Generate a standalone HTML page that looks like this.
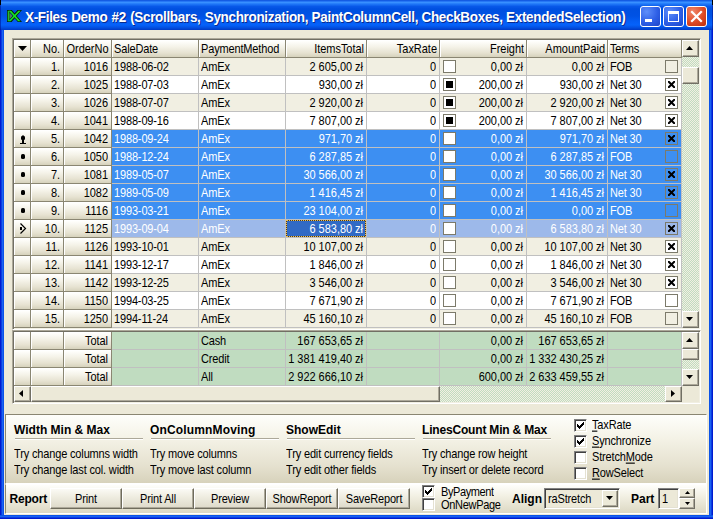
<!DOCTYPE html>
<html><head><meta charset="utf-8"><title>X-Files Demo #2</title>
<style>
html,body{margin:0;padding:0;}
body{width:713px;height:519px;overflow:hidden;background:#000;position:relative;font-family:"Liberation Sans",sans-serif;font-size:11px;color:#000;}
div,span{position:absolute;box-sizing:border-box;white-space:nowrap;}
#win{left:0;top:0;width:713px;height:519px;background:#0A50DC;overflow:hidden;}
#tb{left:0;top:0;width:713px;height:30px;background:linear-gradient(180deg,#0A4CD6 0px,#1E6CF0 1px,#3890FF 2.5px,#2078F8 4px,#0858E8 6.5px,#0050E0 9px,#0052E4 16px,#045EF6 22px,#0562FA 25px,#0350E2 27.5px,#003AC4 30px);}
#title{left:25px;top:9px;height:18px;line-height:18px;font-weight:bold;font-size:13.5px;letter-spacing:-0.33px;transform:scaleY(1.08);transform-origin:0 60%;color:#fff;text-shadow:1px 1px 0 #0A2A8C;}
#client{left:4px;top:30px;width:705px;height:485px;background:#ECE9D8;}
.fx{background:linear-gradient(180deg,#FFFFFD 0%,#F5F3E9 35%,#E6E2D1 75%,#D6D2BC 100%);border-left:1px solid #fff;border-top:1px solid #fff;}
.t{height:17px;line-height:17px;margin-top:1px;transform:scaleY(1.13);transform-origin:50% 50%;letter-spacing:-0.15px;}
.r{text-align:right;letter-spacing:-0.03px;}
.cb{width:13px;height:13px;border:1px solid #7C7A6A;}
.w{color:#fff;}
.btn{background:linear-gradient(180deg,#FBFAF5 0%,#EFEDE1 40%,#DDD9C9 100%);border:1px solid;border-color:#fff #6E6B5C #6E6B5C #fff;box-shadow:inset -1px -1px 0 #ACA899;}
.sb{background:#ECE9D8;border:1px solid;border-color:#fff #716F64 #716F64 #fff;box-shadow:inset -1px -1px 0 #ACA899;}
.trk{background:#D6E3CC;background-image:repeating-conic-gradient(#C0DCC0 0% 25%,#F2EFE2 0% 50%);background-size:2px 2px;}
.b{font-weight:bold;font-size:12px;transform:none;letter-spacing:0;}
u{text-decoration:underline;text-underline-offset:1px;text-decoration-thickness:1px;}
</style></head><body>
<div id="win">
<div id="tb"></div>

<div style="left:0;top:30px;width:4px;height:489px;background:linear-gradient(90deg,#001AD0 0,#001AD0 1px,#0A3EE0 1px,#0A3EE0 2px,#1A62F2 2px,#1A62F2 3px,#0A52E8 3px)"></div>
<div style="left:709px;top:30px;width:4px;height:489px;background:linear-gradient(90deg,#0A52E8 0,#0A52E8 1px,#1A62F2 1px,#1A62F2 2px,#0A3EE0 2px,#0A3EE0 3px,#001AD0 3px)"></div>
<div style="left:0;top:515px;width:713px;height:4px;background:linear-gradient(180deg,#0A52E8 0,#0A52E8 1px,#1A62F2 1px,#1A62F2 2px,#0A3EE0 2px,#0A3EE0 3px,#001AD0 3px)"></div>
<svg style="position:absolute;left:7px;top:10px" width="15" height="12" viewBox="0 0 15 12"><g fill="#05250A"><rect x="0" y="0" width="3.2" height="12"/><path d="M0.8 0 H4.8 L15 12 H10.8 Z"/><path d="M10.4 0 H15 L4.6 12 H0.3 Z"/></g><rect x="0.7" y="0.8" width="1.7" height="10.4" fill="#22B832"/><path d="M2.6 3.2 L5.4 6 L2.6 8.8 Z" fill="#5E7A62"/><g fill="#17E324"><path d="M11.4 0.7 H13.6 L3.6 11.3 H1.4 Z"/><path d="M1.8 0.7 H4.1 L13.4 11.3 H11.2 Z"/></g></svg>
<div id="title"><span style="position:static;word-spacing:0.8px">X-Files Demo #2 (Scrollbars, </span>Synchronization, PaintColumnCell, CheckBoxes, ExtendedSelection)</div>
<div style="left:640px;top:6px;width:21px;height:21px;border:1px solid #fff;border-radius:3px;background:radial-gradient(circle at 30% 25%,#5E8EFA 0%,#2E5FE6 55%,#1C45C8 100%)">
<div style="left:4px;top:12px;width:7px;height:3px;background:#fff"></div>
</div>
<div style="left:663px;top:6px;width:21px;height:21px;border:1px solid #fff;border-radius:3px;background:radial-gradient(circle at 30% 25%,#5E8EFA 0%,#2E5FE6 55%,#1C45C8 100%)">
<div style="left:4px;top:4px;width:11px;height:11px;border:1px solid #fff;border-top:3px solid #fff"></div>
</div>
<div style="left:686px;top:6px;width:21px;height:21px;border:1px solid #fff;border-radius:3px;background:radial-gradient(circle at 30% 25%,#F0876A 0%,#DE4B26 55%,#BC2E0E 100%)">
<svg style="position:absolute;left:3px;top:3px" width="13" height="13" viewBox="0 0 13 13"><path d="M2 2 L11 11 M11 2 L2 11" stroke="#fff" stroke-width="2.2" stroke-linecap="square"/></svg>
</div>
<div id="client"></div>
<div style="left:0;top:0;width:1px;height:30px;background:rgba(0,0,120,0.45)"></div><div style="left:712px;top:0;width:1px;height:30px;background:rgba(0,0,120,0.45)"></div>
<div style="left:0;top:0;width:1px;height:5px;background:#000"></div><div style="left:712px;top:0;width:1px;height:5px;background:#000"></div>
<div style="left:12px;top:38px;width:689px;height:292px;border:1px solid;border-color:#ACA899 #fff #fff #ACA899;box-shadow:inset 1px 1px 0 #716F64,inset -1px -1px 0 #F1EFE2"></div>
<div style="left:12px;top:330px;width:689px;height:74px;border:1px solid;border-color:#ACA899 #fff #fff #ACA899;box-shadow:inset 1px 1px 0 #716F64,inset -1px -1px 0 #F1EFE2"></div>
<div style="left:14px;top:40px;width:17px;height:18px;background:#8A8672"></div>
<div class="fx" style="left:14px;top:40px;width:16px;height:17px"></div>
<div style="left:31px;top:40px;width:33px;height:18px;background:#8A8672"></div>
<div class="fx" style="left:31px;top:40px;width:32px;height:17px"></div>
<div class="t r" style="left:31px;top:40px;width:29px">No.</div>
<div style="left:64px;top:40px;width:48px;height:18px;background:#8A8672"></div>
<div class="fx" style="left:64px;top:40px;width:47px;height:17px"></div>
<div class="t r" style="left:64px;top:40px;width:44.5px">OrderNo</div>
<div style="left:112px;top:40px;width:87px;height:18px;background:#8A8672"></div>
<div class="fx" style="left:112px;top:40px;width:86px;height:17px"></div>
<div class="t" style="left:114px;top:40px">SaleDate</div>
<div style="left:199px;top:40px;width:87px;height:18px;background:#8A8672"></div>
<div class="fx" style="left:199px;top:40px;width:86px;height:17px"></div>
<div class="t" style="left:201px;top:40px">PaymentMethod</div>
<div style="left:286px;top:40px;width:81px;height:18px;background:#8A8672"></div>
<div class="fx" style="left:286px;top:40px;width:80px;height:17px"></div>
<div class="t r" style="left:286px;top:40px;width:78px">ItemsTotal</div>
<div style="left:367px;top:40px;width:73px;height:18px;background:#8A8672"></div>
<div class="fx" style="left:367px;top:40px;width:72px;height:17px"></div>
<div class="t r" style="left:367px;top:40px;width:70px">TaxRate</div>
<div style="left:440px;top:40px;width:87px;height:18px;background:#8A8672"></div>
<div class="fx" style="left:440px;top:40px;width:86px;height:17px"></div>
<div class="t r" style="left:440px;top:40px;width:84px">Freight</div>
<div style="left:527px;top:40px;width:81px;height:18px;background:#8A8672"></div>
<div class="fx" style="left:527px;top:40px;width:80px;height:17px"></div>
<div class="t r" style="left:527px;top:40px;width:78px">AmountPaid</div>
<div style="left:608px;top:40px;width:74px;height:18px;background:#8A8672"></div>
<div class="fx" style="left:608px;top:40px;width:73px;height:17px"></div>
<div class="t" style="left:610px;top:40px">Terms</div>
<svg style="position:absolute;left:18px;top:46px" width="9" height="5" viewBox="0 0 9 5"><path d="M0 0 H9 L4.5 5 Z" fill="#000"/></svg>
<div style="left:14px;top:58px;width:17px;height:18px;background:#8A8672"></div>
<div class="fx" style="left:14px;top:58px;width:16px;height:17px"></div>
<div style="left:31px;top:58px;width:33px;height:18px;background:#8A8672"></div>
<div class="fx" style="left:31px;top:58px;width:32px;height:17px"></div>
<div class="t r" style="left:31px;top:58px;width:29px">1.</div>
<div style="left:64px;top:58px;width:48px;height:18px;background:#8A8672"></div>
<div class="fx" style="left:64px;top:58px;width:47px;height:17px"></div>
<div class="t r" style="left:64px;top:58px;width:44px">1016</div>
<div style="left:112px;top:58px;width:570px;height:18px;background:#C0C0C0"></div>
<div style="left:112px;top:58px;width:86px;height:17px;background:#F1EFE2"></div>
<div style="left:199px;top:58px;width:86px;height:17px;background:#F1EFE2"></div>
<div style="left:286px;top:58px;width:80px;height:17px;background:#F1EFE2"></div>
<div style="left:367px;top:58px;width:72px;height:17px;background:#F1EFE2"></div>
<div style="left:440px;top:58px;width:86px;height:17px;background:#F1EFE2"></div>
<div style="left:527px;top:58px;width:80px;height:17px;background:#F1EFE2"></div>
<div style="left:608px;top:58px;width:73px;height:17px;background:#F1EFE2"></div>
<div class="t" style="left:114px;top:58px">1988-06-02</div>
<div class="t" style="left:201px;top:58px">AmEx</div>
<div class="t r" style="left:286px;top:58px;width:77px">2 605,00 zł</div>
<div class="t r" style="left:367px;top:58px;width:69px">0</div>
<div class="t r" style="left:440px;top:58px;width:83px">0,00 zł</div>
<div class="t r" style="left:527px;top:58px;width:77px">0,00 zł</div>
<div class="t" style="left:610px;top:58px">FOB</div>
<div class="cb" style="left:443px;top:60px;background:#fff"></div>
<div class="cb" style="left:665px;top:60px;background:#F1EFE2"></div>
<div style="left:14px;top:76px;width:17px;height:18px;background:#8A8672"></div>
<div class="fx" style="left:14px;top:76px;width:16px;height:17px"></div>
<div style="left:31px;top:76px;width:33px;height:18px;background:#8A8672"></div>
<div class="fx" style="left:31px;top:76px;width:32px;height:17px"></div>
<div class="t r" style="left:31px;top:76px;width:29px">2.</div>
<div style="left:64px;top:76px;width:48px;height:18px;background:#8A8672"></div>
<div class="fx" style="left:64px;top:76px;width:47px;height:17px"></div>
<div class="t r" style="left:64px;top:76px;width:44px">1025</div>
<div style="left:112px;top:76px;width:570px;height:18px;background:#C0C0C0"></div>
<div style="left:112px;top:76px;width:86px;height:17px;background:#FFFFFF"></div>
<div style="left:199px;top:76px;width:86px;height:17px;background:#FFFFFF"></div>
<div style="left:286px;top:76px;width:80px;height:17px;background:#FFFFFF"></div>
<div style="left:367px;top:76px;width:72px;height:17px;background:#FFFFFF"></div>
<div style="left:440px;top:76px;width:86px;height:17px;background:#FFFFFF"></div>
<div style="left:527px;top:76px;width:80px;height:17px;background:#FFFFFF"></div>
<div style="left:608px;top:76px;width:73px;height:17px;background:#FFFFFF"></div>
<div class="t" style="left:114px;top:76px">1988-07-03</div>
<div class="t" style="left:201px;top:76px">AmEx</div>
<div class="t r" style="left:286px;top:76px;width:77px">930,00 zł</div>
<div class="t r" style="left:367px;top:76px;width:69px">0</div>
<div class="t r" style="left:440px;top:76px;width:83px">200,00 zł</div>
<div class="t r" style="left:527px;top:76px;width:77px">930,00 zł</div>
<div class="t" style="left:610px;top:76px">Net 30</div>
<div class="cb" style="left:443px;top:78px;background:#fff"></div>
<div style="left:446px;top:81px;width:7px;height:7px;background:#000"></div>
<div class="cb" style="left:665px;top:78px;background:#fff"></div>
<svg style="position:absolute;left:668px;top:81px" width="7" height="7" viewBox="0 0 7 7"><path d="M0.8 0.8 L6.2 6.2 M6.2 0.8 L0.8 6.2" stroke="#000" stroke-width="2" stroke-linecap="square"/></svg>
<div style="left:14px;top:94px;width:17px;height:18px;background:#8A8672"></div>
<div class="fx" style="left:14px;top:94px;width:16px;height:17px"></div>
<div style="left:31px;top:94px;width:33px;height:18px;background:#8A8672"></div>
<div class="fx" style="left:31px;top:94px;width:32px;height:17px"></div>
<div class="t r" style="left:31px;top:94px;width:29px">3.</div>
<div style="left:64px;top:94px;width:48px;height:18px;background:#8A8672"></div>
<div class="fx" style="left:64px;top:94px;width:47px;height:17px"></div>
<div class="t r" style="left:64px;top:94px;width:44px">1026</div>
<div style="left:112px;top:94px;width:570px;height:18px;background:#C0C0C0"></div>
<div style="left:112px;top:94px;width:86px;height:17px;background:#F1EFE2"></div>
<div style="left:199px;top:94px;width:86px;height:17px;background:#F1EFE2"></div>
<div style="left:286px;top:94px;width:80px;height:17px;background:#F1EFE2"></div>
<div style="left:367px;top:94px;width:72px;height:17px;background:#F1EFE2"></div>
<div style="left:440px;top:94px;width:86px;height:17px;background:#F1EFE2"></div>
<div style="left:527px;top:94px;width:80px;height:17px;background:#F1EFE2"></div>
<div style="left:608px;top:94px;width:73px;height:17px;background:#F1EFE2"></div>
<div class="t" style="left:114px;top:94px">1988-07-07</div>
<div class="t" style="left:201px;top:94px">AmEx</div>
<div class="t r" style="left:286px;top:94px;width:77px">2 920,00 zł</div>
<div class="t r" style="left:367px;top:94px;width:69px">0</div>
<div class="t r" style="left:440px;top:94px;width:83px">200,00 zł</div>
<div class="t r" style="left:527px;top:94px;width:77px">2 920,00 zł</div>
<div class="t" style="left:610px;top:94px">Net 30</div>
<div class="cb" style="left:443px;top:96px;background:#fff"></div>
<div style="left:446px;top:99px;width:7px;height:7px;background:#000"></div>
<div class="cb" style="left:665px;top:96px;background:#fff"></div>
<svg style="position:absolute;left:668px;top:99px" width="7" height="7" viewBox="0 0 7 7"><path d="M0.8 0.8 L6.2 6.2 M6.2 0.8 L0.8 6.2" stroke="#000" stroke-width="2" stroke-linecap="square"/></svg>
<div style="left:14px;top:112px;width:17px;height:18px;background:#8A8672"></div>
<div class="fx" style="left:14px;top:112px;width:16px;height:17px"></div>
<div style="left:31px;top:112px;width:33px;height:18px;background:#8A8672"></div>
<div class="fx" style="left:31px;top:112px;width:32px;height:17px"></div>
<div class="t r" style="left:31px;top:112px;width:29px">4.</div>
<div style="left:64px;top:112px;width:48px;height:18px;background:#8A8672"></div>
<div class="fx" style="left:64px;top:112px;width:47px;height:17px"></div>
<div class="t r" style="left:64px;top:112px;width:44px">1041</div>
<div style="left:112px;top:112px;width:570px;height:18px;background:#C0C0C0"></div>
<div style="left:112px;top:112px;width:86px;height:17px;background:#FFFFFF"></div>
<div style="left:199px;top:112px;width:86px;height:17px;background:#FFFFFF"></div>
<div style="left:286px;top:112px;width:80px;height:17px;background:#FFFFFF"></div>
<div style="left:367px;top:112px;width:72px;height:17px;background:#FFFFFF"></div>
<div style="left:440px;top:112px;width:86px;height:17px;background:#FFFFFF"></div>
<div style="left:527px;top:112px;width:80px;height:17px;background:#FFFFFF"></div>
<div style="left:608px;top:112px;width:73px;height:17px;background:#FFFFFF"></div>
<div class="t" style="left:114px;top:112px">1988-09-16</div>
<div class="t" style="left:201px;top:112px">AmEx</div>
<div class="t r" style="left:286px;top:112px;width:77px">7 807,00 zł</div>
<div class="t r" style="left:367px;top:112px;width:69px">0</div>
<div class="t r" style="left:440px;top:112px;width:83px">200,00 zł</div>
<div class="t r" style="left:527px;top:112px;width:77px">7 807,00 zł</div>
<div class="t" style="left:610px;top:112px">Net 30</div>
<div class="cb" style="left:443px;top:114px;background:#fff"></div>
<div style="left:446px;top:117px;width:7px;height:7px;background:#000"></div>
<div class="cb" style="left:665px;top:114px;background:#fff"></div>
<svg style="position:absolute;left:668px;top:117px" width="7" height="7" viewBox="0 0 7 7"><path d="M0.8 0.8 L6.2 6.2 M6.2 0.8 L0.8 6.2" stroke="#000" stroke-width="2" stroke-linecap="square"/></svg>
<div style="left:14px;top:130px;width:17px;height:18px;background:#8A8672"></div>
<div class="fx" style="left:14px;top:130px;width:16px;height:17px"></div>
<div style="left:31px;top:130px;width:33px;height:18px;background:#8A8672"></div>
<div class="fx" style="left:31px;top:130px;width:32px;height:17px"></div>
<div class="t r" style="left:31px;top:130px;width:29px">5.</div>
<div style="left:64px;top:130px;width:48px;height:18px;background:#8A8672"></div>
<div class="fx" style="left:64px;top:130px;width:47px;height:17px"></div>
<div class="t r" style="left:64px;top:130px;width:44px">1042</div>
<div style="left:112px;top:130px;width:570px;height:18px;background:#C0C0C0"></div>
<div style="left:112px;top:130px;width:86px;height:17px;background:#3D8FF2"></div>
<div style="left:199px;top:130px;width:86px;height:17px;background:#3D8FF2"></div>
<div style="left:286px;top:130px;width:80px;height:17px;background:#3D8FF2"></div>
<div style="left:367px;top:130px;width:72px;height:17px;background:#3D8FF2"></div>
<div style="left:440px;top:130px;width:86px;height:17px;background:#3D8FF2"></div>
<div style="left:527px;top:130px;width:80px;height:17px;background:#3D8FF2"></div>
<div style="left:608px;top:130px;width:73px;height:17px;background:#3D8FF2"></div>
<div class="t w" style="left:114px;top:130px">1988-09-24</div>
<div class="t w" style="left:201px;top:130px">AmEx</div>
<div class="t r w" style="left:286px;top:130px;width:77px">971,70 zł</div>
<div class="t r w" style="left:367px;top:130px;width:69px">0</div>
<div class="t r w" style="left:440px;top:130px;width:83px">0,00 zł</div>
<div class="t r w" style="left:527px;top:130px;width:77px">971,70 zł</div>
<div class="t w" style="left:610px;top:130px">Net 30</div>
<div class="cb" style="left:443px;top:132px;background:#fff"></div>
<div class="cb" style="left:665px;top:132px;background:#3D8FF2"></div>
<svg style="position:absolute;left:668px;top:135px" width="7" height="7" viewBox="0 0 7 7"><path d="M0.8 0.8 L6.2 6.2 M6.2 0.8 L0.8 6.2" stroke="#000" stroke-width="2" stroke-linecap="square"/></svg>
<svg style="position:absolute;left:19px;top:135px" width="8" height="10" viewBox="0 0 8 10"><rect x="2" y="1" width="4" height="4" rx="1.2" fill="#000"/><rect x="3" y="0.5" width="2" height="8" fill="#000"/><rect x="1" y="8" width="6" height="1" fill="#000"/></svg>
<div style="left:14px;top:148px;width:17px;height:18px;background:#8A8672"></div>
<div class="fx" style="left:14px;top:148px;width:16px;height:17px"></div>
<div style="left:31px;top:148px;width:33px;height:18px;background:#8A8672"></div>
<div class="fx" style="left:31px;top:148px;width:32px;height:17px"></div>
<div class="t r" style="left:31px;top:148px;width:29px">6.</div>
<div style="left:64px;top:148px;width:48px;height:18px;background:#8A8672"></div>
<div class="fx" style="left:64px;top:148px;width:47px;height:17px"></div>
<div class="t r" style="left:64px;top:148px;width:44px">1050</div>
<div style="left:112px;top:148px;width:570px;height:18px;background:#C0C0C0"></div>
<div style="left:112px;top:148px;width:86px;height:17px;background:#3D8FF2"></div>
<div style="left:199px;top:148px;width:86px;height:17px;background:#3D8FF2"></div>
<div style="left:286px;top:148px;width:80px;height:17px;background:#3D8FF2"></div>
<div style="left:367px;top:148px;width:72px;height:17px;background:#3D8FF2"></div>
<div style="left:440px;top:148px;width:86px;height:17px;background:#3D8FF2"></div>
<div style="left:527px;top:148px;width:80px;height:17px;background:#3D8FF2"></div>
<div style="left:608px;top:148px;width:73px;height:17px;background:#3D8FF2"></div>
<div class="t w" style="left:114px;top:148px">1988-12-24</div>
<div class="t w" style="left:201px;top:148px">AmEx</div>
<div class="t r w" style="left:286px;top:148px;width:77px">6 287,85 zł</div>
<div class="t r w" style="left:367px;top:148px;width:69px">0</div>
<div class="t r w" style="left:440px;top:148px;width:83px">0,00 zł</div>
<div class="t r w" style="left:527px;top:148px;width:77px">6 287,85 zł</div>
<div class="t w" style="left:610px;top:148px">FOB</div>
<div class="cb" style="left:443px;top:150px;background:#fff"></div>
<div class="cb" style="left:665px;top:150px;background:#3D8FF2"></div>
<svg style="position:absolute;left:20px;top:153px" width="6" height="7" viewBox="0 0 6 7"><rect x="1" y="1" width="4" height="5" rx="1.6" fill="#000"/></svg>
<div style="left:14px;top:166px;width:17px;height:18px;background:#8A8672"></div>
<div class="fx" style="left:14px;top:166px;width:16px;height:17px"></div>
<div style="left:31px;top:166px;width:33px;height:18px;background:#8A8672"></div>
<div class="fx" style="left:31px;top:166px;width:32px;height:17px"></div>
<div class="t r" style="left:31px;top:166px;width:29px">7.</div>
<div style="left:64px;top:166px;width:48px;height:18px;background:#8A8672"></div>
<div class="fx" style="left:64px;top:166px;width:47px;height:17px"></div>
<div class="t r" style="left:64px;top:166px;width:44px">1081</div>
<div style="left:112px;top:166px;width:570px;height:18px;background:#C0C0C0"></div>
<div style="left:112px;top:166px;width:86px;height:17px;background:#3D8FF2"></div>
<div style="left:199px;top:166px;width:86px;height:17px;background:#3D8FF2"></div>
<div style="left:286px;top:166px;width:80px;height:17px;background:#3D8FF2"></div>
<div style="left:367px;top:166px;width:72px;height:17px;background:#3D8FF2"></div>
<div style="left:440px;top:166px;width:86px;height:17px;background:#3D8FF2"></div>
<div style="left:527px;top:166px;width:80px;height:17px;background:#3D8FF2"></div>
<div style="left:608px;top:166px;width:73px;height:17px;background:#3D8FF2"></div>
<div class="t w" style="left:114px;top:166px">1989-05-07</div>
<div class="t w" style="left:201px;top:166px">AmEx</div>
<div class="t r w" style="left:286px;top:166px;width:77px">30 566,00 zł</div>
<div class="t r w" style="left:367px;top:166px;width:69px">0</div>
<div class="t r w" style="left:440px;top:166px;width:83px">0,00 zł</div>
<div class="t r w" style="left:527px;top:166px;width:77px">30 566,00 zł</div>
<div class="t w" style="left:610px;top:166px">Net 30</div>
<div class="cb" style="left:443px;top:168px;background:#fff"></div>
<div class="cb" style="left:665px;top:168px;background:#3D8FF2"></div>
<svg style="position:absolute;left:668px;top:171px" width="7" height="7" viewBox="0 0 7 7"><path d="M0.8 0.8 L6.2 6.2 M6.2 0.8 L0.8 6.2" stroke="#000" stroke-width="2" stroke-linecap="square"/></svg>
<svg style="position:absolute;left:20px;top:171px" width="6" height="7" viewBox="0 0 6 7"><rect x="1" y="1" width="4" height="5" rx="1.6" fill="#000"/></svg>
<div style="left:14px;top:184px;width:17px;height:18px;background:#8A8672"></div>
<div class="fx" style="left:14px;top:184px;width:16px;height:17px"></div>
<div style="left:31px;top:184px;width:33px;height:18px;background:#8A8672"></div>
<div class="fx" style="left:31px;top:184px;width:32px;height:17px"></div>
<div class="t r" style="left:31px;top:184px;width:29px">8.</div>
<div style="left:64px;top:184px;width:48px;height:18px;background:#8A8672"></div>
<div class="fx" style="left:64px;top:184px;width:47px;height:17px"></div>
<div class="t r" style="left:64px;top:184px;width:44px">1082</div>
<div style="left:112px;top:184px;width:570px;height:18px;background:#C0C0C0"></div>
<div style="left:112px;top:184px;width:86px;height:17px;background:#3D8FF2"></div>
<div style="left:199px;top:184px;width:86px;height:17px;background:#3D8FF2"></div>
<div style="left:286px;top:184px;width:80px;height:17px;background:#3D8FF2"></div>
<div style="left:367px;top:184px;width:72px;height:17px;background:#3D8FF2"></div>
<div style="left:440px;top:184px;width:86px;height:17px;background:#3D8FF2"></div>
<div style="left:527px;top:184px;width:80px;height:17px;background:#3D8FF2"></div>
<div style="left:608px;top:184px;width:73px;height:17px;background:#3D8FF2"></div>
<div class="t w" style="left:114px;top:184px">1989-05-09</div>
<div class="t w" style="left:201px;top:184px">AmEx</div>
<div class="t r w" style="left:286px;top:184px;width:77px">1 416,45 zł</div>
<div class="t r w" style="left:367px;top:184px;width:69px">0</div>
<div class="t r w" style="left:440px;top:184px;width:83px">0,00 zł</div>
<div class="t r w" style="left:527px;top:184px;width:77px">1 416,45 zł</div>
<div class="t w" style="left:610px;top:184px">Net 30</div>
<div class="cb" style="left:443px;top:186px;background:#fff"></div>
<div class="cb" style="left:665px;top:186px;background:#3D8FF2"></div>
<svg style="position:absolute;left:668px;top:189px" width="7" height="7" viewBox="0 0 7 7"><path d="M0.8 0.8 L6.2 6.2 M6.2 0.8 L0.8 6.2" stroke="#000" stroke-width="2" stroke-linecap="square"/></svg>
<svg style="position:absolute;left:20px;top:189px" width="6" height="7" viewBox="0 0 6 7"><rect x="1" y="1" width="4" height="5" rx="1.6" fill="#000"/></svg>
<div style="left:14px;top:202px;width:17px;height:18px;background:#8A8672"></div>
<div class="fx" style="left:14px;top:202px;width:16px;height:17px"></div>
<div style="left:31px;top:202px;width:33px;height:18px;background:#8A8672"></div>
<div class="fx" style="left:31px;top:202px;width:32px;height:17px"></div>
<div class="t r" style="left:31px;top:202px;width:29px">9.</div>
<div style="left:64px;top:202px;width:48px;height:18px;background:#8A8672"></div>
<div class="fx" style="left:64px;top:202px;width:47px;height:17px"></div>
<div class="t r" style="left:64px;top:202px;width:44px">1116</div>
<div style="left:112px;top:202px;width:570px;height:18px;background:#C0C0C0"></div>
<div style="left:112px;top:202px;width:86px;height:17px;background:#3D8FF2"></div>
<div style="left:199px;top:202px;width:86px;height:17px;background:#3D8FF2"></div>
<div style="left:286px;top:202px;width:80px;height:17px;background:#3D8FF2"></div>
<div style="left:367px;top:202px;width:72px;height:17px;background:#3D8FF2"></div>
<div style="left:440px;top:202px;width:86px;height:17px;background:#3D8FF2"></div>
<div style="left:527px;top:202px;width:80px;height:17px;background:#3D8FF2"></div>
<div style="left:608px;top:202px;width:73px;height:17px;background:#3D8FF2"></div>
<div class="t w" style="left:114px;top:202px">1993-03-21</div>
<div class="t w" style="left:201px;top:202px">AmEx</div>
<div class="t r w" style="left:286px;top:202px;width:77px">23 104,00 zł</div>
<div class="t r w" style="left:367px;top:202px;width:69px">0</div>
<div class="t r w" style="left:440px;top:202px;width:83px">0,00 zł</div>
<div class="t r w" style="left:527px;top:202px;width:77px">0,00 zł</div>
<div class="t w" style="left:610px;top:202px">FOB</div>
<div class="cb" style="left:443px;top:204px;background:#fff"></div>
<div class="cb" style="left:665px;top:204px;background:#3D8FF2"></div>
<svg style="position:absolute;left:20px;top:207px" width="6" height="7" viewBox="0 0 6 7"><rect x="1" y="1" width="4" height="5" rx="1.6" fill="#000"/></svg>
<div style="left:14px;top:220px;width:17px;height:18px;background:#8A8672"></div>
<div class="fx" style="left:14px;top:220px;width:16px;height:17px"></div>
<div style="left:31px;top:220px;width:33px;height:18px;background:#8A8672"></div>
<div class="fx" style="left:31px;top:220px;width:32px;height:17px"></div>
<div class="t r" style="left:31px;top:220px;width:29px">10.</div>
<div style="left:64px;top:220px;width:48px;height:18px;background:#8A8672"></div>
<div class="fx" style="left:64px;top:220px;width:47px;height:17px"></div>
<div class="t r" style="left:64px;top:220px;width:44px">1125</div>
<div style="left:112px;top:220px;width:570px;height:18px;background:#C0C0C0"></div>
<div style="left:112px;top:220px;width:86px;height:17px;background:#9DB9EA"></div>
<div style="left:199px;top:220px;width:86px;height:17px;background:#9DB9EA"></div>
<div style="left:286px;top:220px;width:80px;height:17px;background:#316AC5"></div>
<div style="left:367px;top:220px;width:72px;height:17px;background:#9DB9EA"></div>
<div style="left:440px;top:220px;width:86px;height:17px;background:#9DB9EA"></div>
<div style="left:527px;top:220px;width:80px;height:17px;background:#9DB9EA"></div>
<div style="left:608px;top:220px;width:73px;height:17px;background:#9DB9EA"></div>
<div style="left:286px;top:220px;width:80px;height:17px;border:1px solid #4A3A20"></div>
<div style="left:286px;top:220px;width:80px;height:17px;border:1px dotted #F0C050"></div>
<div class="t w" style="left:114px;top:220px">1993-09-04</div>
<div class="t w" style="left:201px;top:220px">AmEx</div>
<div class="t r w" style="left:286px;top:220px;width:77px">6 583,80 zł</div>
<div class="t r w" style="left:367px;top:220px;width:69px">0</div>
<div class="t r w" style="left:440px;top:220px;width:83px">0,00 zł</div>
<div class="t r w" style="left:527px;top:220px;width:77px">6 583,80 zł</div>
<div class="t w" style="left:610px;top:220px">Net 30</div>
<div class="cb" style="left:443px;top:222px;background:#fff"></div>
<div class="cb" style="left:665px;top:222px;background:#9DB9EA"></div>
<svg style="position:absolute;left:668px;top:225px" width="7" height="7" viewBox="0 0 7 7"><path d="M0.8 0.8 L6.2 6.2 M6.2 0.8 L0.8 6.2" stroke="#000" stroke-width="2" stroke-linecap="square"/></svg>
<svg style="position:absolute;left:19px;top:222px" width="8" height="13" viewBox="0 0 8 13"><path d="M1.5 1.5 L6.5 6.5 L1.5 11.5" fill="none" stroke="#000" stroke-width="1.2"/><rect x="1" y="5" width="2" height="3" fill="#000"/></svg>
<div style="left:14px;top:238px;width:17px;height:18px;background:#8A8672"></div>
<div class="fx" style="left:14px;top:238px;width:16px;height:17px"></div>
<div style="left:31px;top:238px;width:33px;height:18px;background:#8A8672"></div>
<div class="fx" style="left:31px;top:238px;width:32px;height:17px"></div>
<div class="t r" style="left:31px;top:238px;width:29px">11.</div>
<div style="left:64px;top:238px;width:48px;height:18px;background:#8A8672"></div>
<div class="fx" style="left:64px;top:238px;width:47px;height:17px"></div>
<div class="t r" style="left:64px;top:238px;width:44px">1126</div>
<div style="left:112px;top:238px;width:570px;height:18px;background:#C0C0C0"></div>
<div style="left:112px;top:238px;width:86px;height:17px;background:#F1EFE2"></div>
<div style="left:199px;top:238px;width:86px;height:17px;background:#F1EFE2"></div>
<div style="left:286px;top:238px;width:80px;height:17px;background:#F1EFE2"></div>
<div style="left:367px;top:238px;width:72px;height:17px;background:#F1EFE2"></div>
<div style="left:440px;top:238px;width:86px;height:17px;background:#F1EFE2"></div>
<div style="left:527px;top:238px;width:80px;height:17px;background:#F1EFE2"></div>
<div style="left:608px;top:238px;width:73px;height:17px;background:#F1EFE2"></div>
<div class="t" style="left:114px;top:238px">1993-10-01</div>
<div class="t" style="left:201px;top:238px">AmEx</div>
<div class="t r" style="left:286px;top:238px;width:77px">10 107,00 zł</div>
<div class="t r" style="left:367px;top:238px;width:69px">0</div>
<div class="t r" style="left:440px;top:238px;width:83px">0,00 zł</div>
<div class="t r" style="left:527px;top:238px;width:77px">10 107,00 zł</div>
<div class="t" style="left:610px;top:238px">Net 30</div>
<div class="cb" style="left:443px;top:240px;background:#fff"></div>
<div class="cb" style="left:665px;top:240px;background:#fff"></div>
<svg style="position:absolute;left:668px;top:243px" width="7" height="7" viewBox="0 0 7 7"><path d="M0.8 0.8 L6.2 6.2 M6.2 0.8 L0.8 6.2" stroke="#000" stroke-width="2" stroke-linecap="square"/></svg>
<div style="left:14px;top:256px;width:17px;height:18px;background:#8A8672"></div>
<div class="fx" style="left:14px;top:256px;width:16px;height:17px"></div>
<div style="left:31px;top:256px;width:33px;height:18px;background:#8A8672"></div>
<div class="fx" style="left:31px;top:256px;width:32px;height:17px"></div>
<div class="t r" style="left:31px;top:256px;width:29px">12.</div>
<div style="left:64px;top:256px;width:48px;height:18px;background:#8A8672"></div>
<div class="fx" style="left:64px;top:256px;width:47px;height:17px"></div>
<div class="t r" style="left:64px;top:256px;width:44px">1141</div>
<div style="left:112px;top:256px;width:570px;height:18px;background:#C0C0C0"></div>
<div style="left:112px;top:256px;width:86px;height:17px;background:#FFFFFF"></div>
<div style="left:199px;top:256px;width:86px;height:17px;background:#FFFFFF"></div>
<div style="left:286px;top:256px;width:80px;height:17px;background:#FFFFFF"></div>
<div style="left:367px;top:256px;width:72px;height:17px;background:#FFFFFF"></div>
<div style="left:440px;top:256px;width:86px;height:17px;background:#FFFFFF"></div>
<div style="left:527px;top:256px;width:80px;height:17px;background:#FFFFFF"></div>
<div style="left:608px;top:256px;width:73px;height:17px;background:#FFFFFF"></div>
<div class="t" style="left:114px;top:256px">1993-12-17</div>
<div class="t" style="left:201px;top:256px">AmEx</div>
<div class="t r" style="left:286px;top:256px;width:77px">1 846,00 zł</div>
<div class="t r" style="left:367px;top:256px;width:69px">0</div>
<div class="t r" style="left:440px;top:256px;width:83px">0,00 zł</div>
<div class="t r" style="left:527px;top:256px;width:77px">1 846,00 zł</div>
<div class="t" style="left:610px;top:256px">Net 30</div>
<div class="cb" style="left:443px;top:258px;background:#fff"></div>
<div class="cb" style="left:665px;top:258px;background:#fff"></div>
<svg style="position:absolute;left:668px;top:261px" width="7" height="7" viewBox="0 0 7 7"><path d="M0.8 0.8 L6.2 6.2 M6.2 0.8 L0.8 6.2" stroke="#000" stroke-width="2" stroke-linecap="square"/></svg>
<div style="left:14px;top:274px;width:17px;height:18px;background:#8A8672"></div>
<div class="fx" style="left:14px;top:274px;width:16px;height:17px"></div>
<div style="left:31px;top:274px;width:33px;height:18px;background:#8A8672"></div>
<div class="fx" style="left:31px;top:274px;width:32px;height:17px"></div>
<div class="t r" style="left:31px;top:274px;width:29px">13.</div>
<div style="left:64px;top:274px;width:48px;height:18px;background:#8A8672"></div>
<div class="fx" style="left:64px;top:274px;width:47px;height:17px"></div>
<div class="t r" style="left:64px;top:274px;width:44px">1142</div>
<div style="left:112px;top:274px;width:570px;height:18px;background:#C0C0C0"></div>
<div style="left:112px;top:274px;width:86px;height:17px;background:#F1EFE2"></div>
<div style="left:199px;top:274px;width:86px;height:17px;background:#F1EFE2"></div>
<div style="left:286px;top:274px;width:80px;height:17px;background:#F1EFE2"></div>
<div style="left:367px;top:274px;width:72px;height:17px;background:#F1EFE2"></div>
<div style="left:440px;top:274px;width:86px;height:17px;background:#F1EFE2"></div>
<div style="left:527px;top:274px;width:80px;height:17px;background:#F1EFE2"></div>
<div style="left:608px;top:274px;width:73px;height:17px;background:#F1EFE2"></div>
<div class="t" style="left:114px;top:274px">1993-12-25</div>
<div class="t" style="left:201px;top:274px">AmEx</div>
<div class="t r" style="left:286px;top:274px;width:77px">3 546,00 zł</div>
<div class="t r" style="left:367px;top:274px;width:69px">0</div>
<div class="t r" style="left:440px;top:274px;width:83px">0,00 zł</div>
<div class="t r" style="left:527px;top:274px;width:77px">3 546,00 zł</div>
<div class="t" style="left:610px;top:274px">Net 30</div>
<div class="cb" style="left:443px;top:276px;background:#fff"></div>
<div class="cb" style="left:665px;top:276px;background:#fff"></div>
<svg style="position:absolute;left:668px;top:279px" width="7" height="7" viewBox="0 0 7 7"><path d="M0.8 0.8 L6.2 6.2 M6.2 0.8 L0.8 6.2" stroke="#000" stroke-width="2" stroke-linecap="square"/></svg>
<div style="left:14px;top:292px;width:17px;height:18px;background:#8A8672"></div>
<div class="fx" style="left:14px;top:292px;width:16px;height:17px"></div>
<div style="left:31px;top:292px;width:33px;height:18px;background:#8A8672"></div>
<div class="fx" style="left:31px;top:292px;width:32px;height:17px"></div>
<div class="t r" style="left:31px;top:292px;width:29px">14.</div>
<div style="left:64px;top:292px;width:48px;height:18px;background:#8A8672"></div>
<div class="fx" style="left:64px;top:292px;width:47px;height:17px"></div>
<div class="t r" style="left:64px;top:292px;width:44px">1150</div>
<div style="left:112px;top:292px;width:570px;height:18px;background:#C0C0C0"></div>
<div style="left:112px;top:292px;width:86px;height:17px;background:#FFFFFF"></div>
<div style="left:199px;top:292px;width:86px;height:17px;background:#FFFFFF"></div>
<div style="left:286px;top:292px;width:80px;height:17px;background:#FFFFFF"></div>
<div style="left:367px;top:292px;width:72px;height:17px;background:#FFFFFF"></div>
<div style="left:440px;top:292px;width:86px;height:17px;background:#FFFFFF"></div>
<div style="left:527px;top:292px;width:80px;height:17px;background:#FFFFFF"></div>
<div style="left:608px;top:292px;width:73px;height:17px;background:#FFFFFF"></div>
<div class="t" style="left:114px;top:292px">1994-03-25</div>
<div class="t" style="left:201px;top:292px">AmEx</div>
<div class="t r" style="left:286px;top:292px;width:77px">7 671,90 zł</div>
<div class="t r" style="left:367px;top:292px;width:69px">0</div>
<div class="t r" style="left:440px;top:292px;width:83px">0,00 zł</div>
<div class="t r" style="left:527px;top:292px;width:77px">7 671,90 zł</div>
<div class="t" style="left:610px;top:292px">FOB</div>
<div class="cb" style="left:443px;top:294px;background:#fff"></div>
<div class="cb" style="left:665px;top:294px;background:#FFFFFF"></div>
<div style="left:14px;top:310px;width:17px;height:18px;background:#8A8672"></div>
<div class="fx" style="left:14px;top:310px;width:16px;height:17px"></div>
<div style="left:31px;top:310px;width:33px;height:18px;background:#8A8672"></div>
<div class="fx" style="left:31px;top:310px;width:32px;height:17px"></div>
<div class="t r" style="left:31px;top:310px;width:29px">15.</div>
<div style="left:64px;top:310px;width:48px;height:18px;background:#8A8672"></div>
<div class="fx" style="left:64px;top:310px;width:47px;height:17px"></div>
<div class="t r" style="left:64px;top:310px;width:44px">1250</div>
<div style="left:112px;top:310px;width:570px;height:18px;background:#C0C0C0"></div>
<div style="left:112px;top:310px;width:86px;height:17px;background:#F1EFE2"></div>
<div style="left:199px;top:310px;width:86px;height:17px;background:#F1EFE2"></div>
<div style="left:286px;top:310px;width:80px;height:17px;background:#F1EFE2"></div>
<div style="left:367px;top:310px;width:72px;height:17px;background:#F1EFE2"></div>
<div style="left:440px;top:310px;width:86px;height:17px;background:#F1EFE2"></div>
<div style="left:527px;top:310px;width:80px;height:17px;background:#F1EFE2"></div>
<div style="left:608px;top:310px;width:73px;height:17px;background:#F1EFE2"></div>
<div class="t" style="left:114px;top:310px">1994-11-24</div>
<div class="t" style="left:201px;top:310px">AmEx</div>
<div class="t r" style="left:286px;top:310px;width:77px">45 160,10 zł</div>
<div class="t r" style="left:367px;top:310px;width:69px">0</div>
<div class="t r" style="left:440px;top:310px;width:83px">0,00 zł</div>
<div class="t r" style="left:527px;top:310px;width:77px">45 160,10 zł</div>
<div class="t" style="left:610px;top:310px">FOB</div>
<div class="cb" style="left:443px;top:312px;background:#fff"></div>
<div class="cb" style="left:665px;top:312px;background:#F1EFE2"></div>
<div class="trk" style="left:682px;top:40px;width:17px;height:288px"></div>
<div class="sb" style="left:682px;top:40px;width:17px;height:17px"></div>
<svg style="position:absolute;left:686px;top:46px" width="7" height="4" viewBox="0 0 7 4"><path d="M0 4 H7 L3.5 0 Z" fill="#000"/></svg>
<div class="sb" style="left:682px;top:67px;width:17px;height:17px"></div>
<div class="sb" style="left:682px;top:311px;width:17px;height:17px"></div>
<svg style="position:absolute;left:686px;top:317px" width="7" height="4" viewBox="0 0 7 4"><path d="M0 0 H7 L3.5 4 Z" fill="#000"/></svg>
<div style="left:14px;top:332px;width:17px;height:18px;background:#8A8672"></div>
<div class="fx" style="left:14px;top:332px;width:16px;height:17px"></div>
<div style="left:31px;top:332px;width:33px;height:18px;background:#8A8672"></div>
<div class="fx" style="left:31px;top:332px;width:32px;height:17px"></div>
<div style="left:64px;top:332px;width:48px;height:18px;background:#8A8672"></div>
<div class="fx" style="left:64px;top:332px;width:47px;height:17px"></div>
<div class="t r" style="left:64px;top:332px;width:44px">Total</div>
<div style="left:112px;top:332px;width:570px;height:18px;background:#C0C0C0"></div>
<div style="left:112px;top:332px;width:86px;height:17px;background:#C0DCC0"></div>
<div style="left:199px;top:332px;width:86px;height:17px;background:#C0DCC0"></div>
<div style="left:286px;top:332px;width:80px;height:17px;background:#C0DCC0"></div>
<div style="left:367px;top:332px;width:72px;height:17px;background:#C0DCC0"></div>
<div style="left:440px;top:332px;width:86px;height:17px;background:#C0DCC0"></div>
<div style="left:527px;top:332px;width:80px;height:17px;background:#C0DCC0"></div>
<div style="left:608px;top:332px;width:73px;height:17px;background:#C0DCC0"></div>
<div class="t" style="left:201px;top:332px">Cash</div>
<div class="t r" style="left:286px;top:332px;width:77px">167 653,65 zł</div>
<div class="t r" style="left:440px;top:332px;width:83px">0,00 zł</div>
<div class="t r" style="left:527px;top:332px;width:77px">167 653,65 zł</div>
<div style="left:14px;top:350px;width:17px;height:18px;background:#8A8672"></div>
<div class="fx" style="left:14px;top:350px;width:16px;height:17px"></div>
<div style="left:31px;top:350px;width:33px;height:18px;background:#8A8672"></div>
<div class="fx" style="left:31px;top:350px;width:32px;height:17px"></div>
<div style="left:64px;top:350px;width:48px;height:18px;background:#8A8672"></div>
<div class="fx" style="left:64px;top:350px;width:47px;height:17px"></div>
<div class="t r" style="left:64px;top:350px;width:44px">Total</div>
<div style="left:112px;top:350px;width:570px;height:18px;background:#C0C0C0"></div>
<div style="left:112px;top:350px;width:86px;height:17px;background:#C0DCC0"></div>
<div style="left:199px;top:350px;width:86px;height:17px;background:#C0DCC0"></div>
<div style="left:286px;top:350px;width:80px;height:17px;background:#C0DCC0"></div>
<div style="left:367px;top:350px;width:72px;height:17px;background:#C0DCC0"></div>
<div style="left:440px;top:350px;width:86px;height:17px;background:#C0DCC0"></div>
<div style="left:527px;top:350px;width:80px;height:17px;background:#C0DCC0"></div>
<div style="left:608px;top:350px;width:73px;height:17px;background:#C0DCC0"></div>
<div class="t" style="left:201px;top:350px">Credit</div>
<div class="t r" style="left:286px;top:350px;width:77px">1 381 419,40 zł</div>
<div class="t r" style="left:440px;top:350px;width:83px">0,00 zł</div>
<div class="t r" style="left:527px;top:350px;width:77px">1 332 430,25 zł</div>
<div style="left:14px;top:368px;width:17px;height:18px;background:#8A8672"></div>
<div class="fx" style="left:14px;top:368px;width:16px;height:17px"></div>
<div style="left:31px;top:368px;width:33px;height:18px;background:#8A8672"></div>
<div class="fx" style="left:31px;top:368px;width:32px;height:17px"></div>
<div style="left:64px;top:368px;width:48px;height:18px;background:#8A8672"></div>
<div class="fx" style="left:64px;top:368px;width:47px;height:17px"></div>
<div class="t r" style="left:64px;top:368px;width:44px">Total</div>
<div style="left:112px;top:368px;width:570px;height:18px;background:#C0C0C0"></div>
<div style="left:112px;top:368px;width:86px;height:17px;background:#C0DCC0"></div>
<div style="left:199px;top:368px;width:86px;height:17px;background:#C0DCC0"></div>
<div style="left:286px;top:368px;width:80px;height:17px;background:#C0DCC0"></div>
<div style="left:367px;top:368px;width:72px;height:17px;background:#C0DCC0"></div>
<div style="left:440px;top:368px;width:86px;height:17px;background:#C0DCC0"></div>
<div style="left:527px;top:368px;width:80px;height:17px;background:#C0DCC0"></div>
<div style="left:608px;top:368px;width:73px;height:17px;background:#C0DCC0"></div>
<div class="t" style="left:201px;top:368px">All</div>
<div class="t r" style="left:286px;top:368px;width:77px">2 922 666,10 zł</div>
<div class="t r" style="left:440px;top:368px;width:83px">600,00 zł</div>
<div class="t r" style="left:527px;top:368px;width:77px">2 633 459,55 zł</div>
<div class="trk" style="left:682px;top:332px;width:17px;height:54px"></div>
<div class="sb" style="left:682px;top:332px;width:17px;height:17px"></div>
<svg style="position:absolute;left:686px;top:338px" width="7" height="4" viewBox="0 0 7 4"><path d="M0 4 H7 L3.5 0 Z" fill="#000"/></svg>
<div class="sb" style="left:682px;top:349px;width:17px;height:11px"></div>
<div class="sb" style="left:682px;top:369px;width:17px;height:17px"></div>
<svg style="position:absolute;left:686px;top:375px" width="7" height="4" viewBox="0 0 7 4"><path d="M0 0 H7 L3.5 4 Z" fill="#000"/></svg>
<div class="trk" style="left:14px;top:386px;width:668px;height:16px"></div>
<div class="sb" style="left:14px;top:386px;width:17px;height:16px"></div>
<svg style="position:absolute;left:19px;top:390px" width="4" height="7" viewBox="0 0 4 7"><path d="M4 0 V7 L0 3.5 Z" fill="#000"/></svg>
<div class="sb" style="left:31px;top:386px;width:409px;height:16px"></div>
<div class="sb" style="left:665px;top:386px;width:17px;height:16px"></div>
<svg style="position:absolute;left:671px;top:390px" width="4" height="7" viewBox="0 0 4 7"><path d="M0 0 V7 L4 3.5 Z" fill="#000"/></svg>
<div style="left:682px;top:386px;width:17px;height:16px;background:#ECE9D8"></div>
<div style="left:5px;top:414px;width:702px;height:70px;border:1px solid;border-color:#8A8672 #fff #fff #8A8672;background:linear-gradient(180deg,#FEFEFB 0%,#F4F2E6 35%,#E5E1CF 75%,#D7D2BB 100%)"></div>
<div style="left:5px;top:484px;width:702px;height:30px;border:1px solid;border-color:#fff #fff #fff #8A8672;background:linear-gradient(180deg,#FEFEFB 0%,#F2F0E3 40%,#DCD8C3 100%)"></div>
<div class="t b" style="left:14px;top:421px;letter-spacing:0">Width Min &amp; Max</div>
<div style="left:15px;top:438px;width:128px;height:1px;background:#ACA899"></div>
<div style="left:15px;top:439px;width:128px;height:1px;background:#fff"></div>
<div class="t" style="left:14px;top:445px">Try change columns width</div>
<div class="t" style="left:14px;top:461px">Try change last col. width</div>
<div class="t b" style="left:150px;top:421px;letter-spacing:0.15px">OnColumnMoving</div>
<div style="left:151px;top:438px;width:128px;height:1px;background:#ACA899"></div>
<div style="left:151px;top:439px;width:128px;height:1px;background:#fff"></div>
<div class="t" style="left:150px;top:445px">Try move columns</div>
<div class="t" style="left:150px;top:461px">Try move last column</div>
<div class="t b" style="left:286px;top:421px;letter-spacing:0">ShowEdit</div>
<div style="left:287px;top:438px;width:128px;height:1px;background:#ACA899"></div>
<div style="left:287px;top:439px;width:128px;height:1px;background:#fff"></div>
<div class="t" style="left:286px;top:445px">Try edit currency fields</div>
<div class="t" style="left:286px;top:461px">Try edit other fields</div>
<div class="t b" style="left:422px;top:421px;letter-spacing:-0.18px">LinesCount Min &amp; Max</div>
<div style="left:423px;top:438px;width:128px;height:1px;background:#ACA899"></div>
<div style="left:423px;top:439px;width:128px;height:1px;background:#fff"></div>
<div class="t" style="left:422px;top:445px">Try change row height</div>
<div class="t" style="left:422px;top:461px">Try insert or delete record</div>
<div style="left:574px;top:419px;width:13px;height:13px;background:#fff;border:1px solid;border-color:#808080 #fff #fff #808080;box-shadow:inset 1px 1px 0 #404040,inset -1px -1px 0 #E4E1D2"></div>
<svg style="position:absolute;left:577px;top:422px" width="7" height="7" viewBox="0 0 7 7" shape-rendering="crispEdges" fill="#000"><rect x="0" y="2" width="1" height="3"/><rect x="1" y="3" width="1" height="3"/><rect x="2" y="4" width="1" height="3"/><rect x="3" y="3" width="1" height="3"/><rect x="4" y="2" width="1" height="3"/><rect x="5" y="1" width="1" height="3"/><rect x="6" y="0" width="1" height="3"/></svg>
<div class="t" style="left:592px;top:416px"><u>T</u>axRate</div>
<div style="left:574px;top:435px;width:13px;height:13px;background:#fff;border:1px solid;border-color:#808080 #fff #fff #808080;box-shadow:inset 1px 1px 0 #404040,inset -1px -1px 0 #E4E1D2"></div>
<svg style="position:absolute;left:577px;top:438px" width="7" height="7" viewBox="0 0 7 7" shape-rendering="crispEdges" fill="#000"><rect x="0" y="2" width="1" height="3"/><rect x="1" y="3" width="1" height="3"/><rect x="2" y="4" width="1" height="3"/><rect x="3" y="3" width="1" height="3"/><rect x="4" y="2" width="1" height="3"/><rect x="5" y="1" width="1" height="3"/><rect x="6" y="0" width="1" height="3"/></svg>
<div class="t" style="left:592px;top:432px"><u>S</u>ynchronize</div>
<div style="left:574px;top:451px;width:13px;height:13px;background:#fff;border:1px solid;border-color:#808080 #fff #fff #808080;box-shadow:inset 1px 1px 0 #404040,inset -1px -1px 0 #E4E1D2"></div>
<div class="t" style="left:592px;top:448px">Stretch<u>M</u>ode</div>
<div style="left:574px;top:467px;width:13px;height:13px;background:#fff;border:1px solid;border-color:#808080 #fff #fff #808080;box-shadow:inset 1px 1px 0 #404040,inset -1px -1px 0 #E4E1D2"></div>
<div class="t" style="left:592px;top:464px"><u>R</u>owSelect</div>
<div class="t b" style="left:9.5px;top:490px;letter-spacing:-0.2px">Report</div>
<div class="btn" style="left:50px;top:488px;width:72px;height:21px"></div>
<div class="t" style="left:50px;top:490px;width:72px;text-align:center">Print</div>
<div class="btn" style="left:122px;top:488px;width:72px;height:21px"></div>
<div class="t" style="left:122px;top:490px;width:72px;text-align:center">Print All</div>
<div class="btn" style="left:194px;top:488px;width:72px;height:21px"></div>
<div class="t" style="left:194px;top:490px;width:72px;text-align:center">Preview</div>
<div class="btn" style="left:266px;top:488px;width:72px;height:21px"></div>
<div class="t" style="left:266px;top:490px;width:72px;text-align:center">ShowReport</div>
<div class="btn" style="left:338px;top:488px;width:72px;height:21px"></div>
<div class="t" style="left:338px;top:490px;width:72px;text-align:center">SaveReport</div>
<div style="left:422px;top:485px;width:13px;height:13px;background:#fff;border:1px solid;border-color:#808080 #fff #fff #808080;box-shadow:inset 1px 1px 0 #404040,inset -1px -1px 0 #E4E1D2"></div>
<svg style="position:absolute;left:425px;top:488px" width="7" height="7" viewBox="0 0 7 7" shape-rendering="crispEdges" fill="#000"><rect x="0" y="2" width="1" height="3"/><rect x="1" y="3" width="1" height="3"/><rect x="2" y="4" width="1" height="3"/><rect x="3" y="3" width="1" height="3"/><rect x="4" y="2" width="1" height="3"/><rect x="5" y="1" width="1" height="3"/><rect x="6" y="0" width="1" height="3"/></svg>
<div class="t" style="left:441px;top:483px;letter-spacing:-0.4px">ByPayment</div>
<div style="left:422px;top:498px;width:13px;height:13px;background:#fff;border:1px solid;border-color:#808080 #fff #fff #808080;box-shadow:inset 1px 1px 0 #404040,inset -1px -1px 0 #E4E1D2"></div>
<div class="t" style="left:441px;top:496px;letter-spacing:-0.3px">OnNewPage</div>
<div class="t b" style="left:512px;top:490px">Align</div>
<div style="left:544px;top:488px;width:76px;height:21px;background:#ECE9D8;border:1px solid;border-color:#808080 #fff #fff #808080;box-shadow:inset 1px 1px 0 #404040,inset -1px -1px 0 #E4E1D2"></div>
<div class="t" style="left:548px;top:490px">raStretch</div>
<div class="sb" style="left:602px;top:490px;width:16px;height:17px"></div>
<svg style="position:absolute;left:606px;top:496px" width="7" height="4" viewBox="0 0 7 4"><path d="M0 0 H7 L3.5 4 Z" fill="#000"/></svg>
<div class="t b" style="left:631px;top:490px">Part</div>
<div style="left:658px;top:488px;width:21px;height:21px;background:#ECE9D8;border:1px solid;border-color:#808080 #fff #fff #808080;box-shadow:inset 1px 1px 0 #404040,inset -1px -1px 0 #E4E1D2"></div>
<div class="t" style="left:662px;top:490px">1</div>
<div class="sb" style="left:679px;top:488px;width:16px;height:10px"></div>
<div class="sb" style="left:679px;top:498px;width:16px;height:11px"></div>
<svg style="position:absolute;left:685px;top:491px" width="5" height="3" viewBox="0 0 5 3"><path d="M0 3 H5 L2.5 0 Z" fill="#000"/></svg>
<svg style="position:absolute;left:685px;top:502px" width="5" height="3" viewBox="0 0 5 3"><path d="M0 0 H5 L2.5 3 Z" fill="#000"/></svg>
</div></body></html>
